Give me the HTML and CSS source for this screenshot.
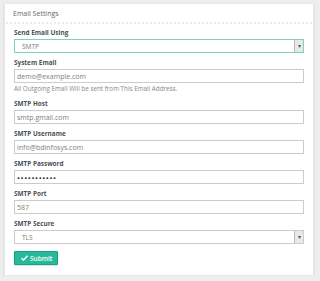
FILE: index.html
```html
<!DOCTYPE html>
<html lang="en">
<head>
  <meta charset="UTF-8" />
  <meta name="viewport" content="width=device-width, initial-scale=1.0" />
  <title>Email Settings</title>
  <link rel="stylesheet" href="styles.css">
</head>
<body>
  <!-- ======= SETTINGS PANEL ======= -->
  <section class="panel">
    <div class="panel-title">Email Settings</div>

    <form class="panel-body">
      <div class="group">
        <label>Send Email Using</label>
        <div class="select focus">
          <span>SMTP</span>
          <i class="caret">&#9662;</i>
        </div>
      </div>

      <div class="group">
        <label>System Email</label>
        <input type="text" class="field" value="demo@example.com" />
        <p class="help">All Outgoing Email Will be sent from This Email Address.</p>
      </div>

      <div class="group">
        <label>SMTP Host</label>
        <input type="text" class="field" value="smtp.gmail.com" />
      </div>

      <div class="group">
        <label>SMTP Username</label>
        <input type="text" class="field" value="info@bdinfosys.com" />
      </div>

      <div class="group">
        <label>SMTP Password</label>
        <input type="password" class="field pass" value="secretpass1" />
      </div>

      <div class="group">
        <label>SMTP Port</label>
        <input type="text" class="field" value="587" />
      </div>

      <div class="group">
        <label>SMTP Secure</label>
        <div class="select">
          <span>TLS</span>
          <i class="caret">&#9662;</i>
        </div>
      </div>

      <button type="button" class="btn">
        <svg width="7" height="6" viewBox="0 0 14 12"><path d="M1 6.5 L5 10 L13 1.5" fill="none" stroke="#fff" stroke-width="3"/></svg>
        Submit
      </button>
    </form>
  </section>
</body>
</html>
```

FILE: styles.css
```css
/* ======= GLOBAL ======= */
*,*::before,*::after{box-sizing:border-box;margin:0;padding:0}

body {
  font-family: 'Open Sans', sans-serif;
  background: #eeeeee;
  color: #777;
  padding: 3px 6px 0 4px;
}

/* ======= PANEL ======= */
.panel{background:#fff;border:1px solid #e6e9ed;box-shadow:0 1px 2px rgba(0,0,0,.12);width:310px;height:273px}
.panel-title{height:20px;margin:0 1px;padding:6px 7px 0;font-size:7px;line-height:8px;color:#666;border-bottom:2px dotted #e6e9ed}
.panel-body{padding:5px 9px 0}

/* Groups */
.group{margin-bottom:6px}
.group label{display:block;font-size:6.4px;font-weight:700;color:#4a4f55;line-height:8px;margin-bottom:2px}
.help{font-size:6.3px;color:#888;margin:2px 0 7px;line-height:8px}
.group:has(.help){margin-bottom:0}

/* Inputs */
.field{display:block;width:100%;height:14px;border:1px solid #ccc;padding:0 2px;font-family:inherit;font-size:7px;color:#808080;background:#fff;outline:none}
.field.pass{font-size:8px;letter-spacing:.6px;color:#222}

/* Select */
.select{display:flex;align-items:center;height:14px;border:1px solid #ccc;font-size:6.5px;color:#777;padding-left:7px}
.select span{flex:1}
.select.focus{border-color:#7fd1bd}
.caret{display:flex;align-items:center;justify-content:center;width:9px;height:100%;background:#e8e8e8;border-left:1px solid #bbb;font-style:normal;font-size:6px;color:#555}

/* Button */
.btn{display:flex;align-items:center;gap:2px;margin-top:7px;height:14px;padding:0 5px 0 6px;background:#26b99a;border:1px solid #169f85;color:#fff;font-family:inherit;font-size:6.5px;font-weight:600;border-radius:1px;box-shadow:0 1px 2px rgba(0,0,0,.15)}
```
